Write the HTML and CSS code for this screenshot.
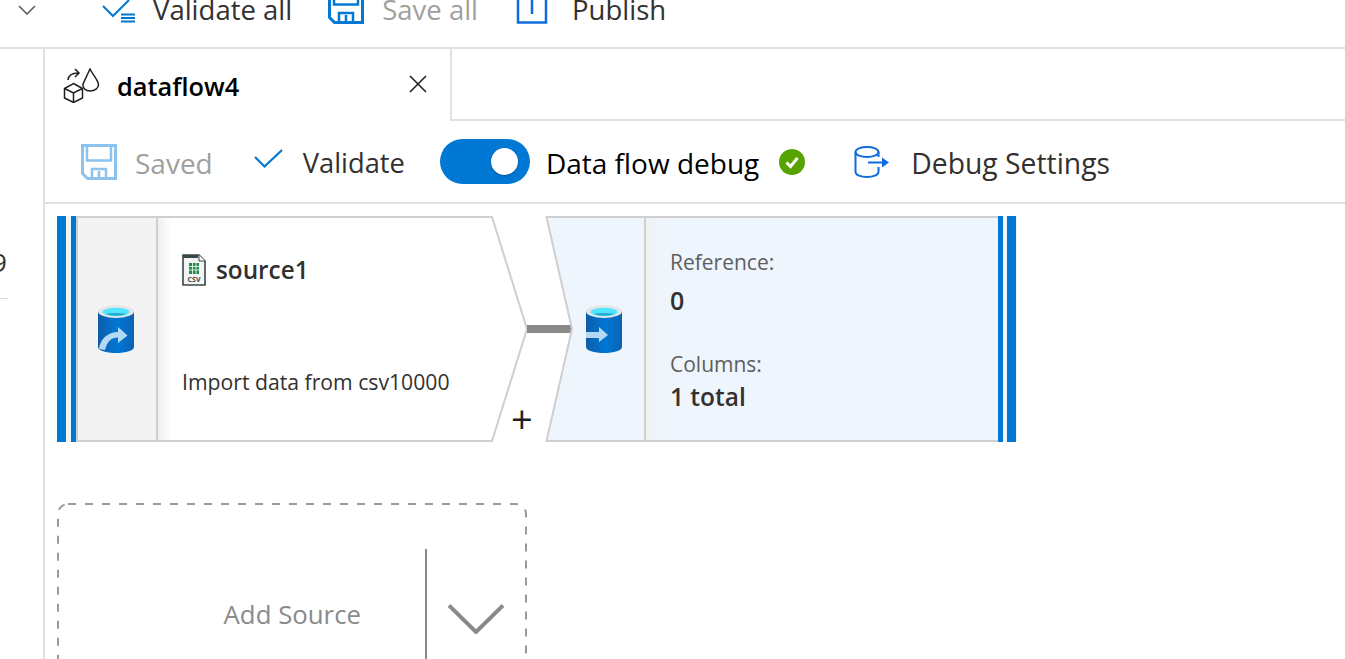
FILE: index.html
```html
<!DOCTYPE html>
<html lang="en">
<head>
<meta charset="utf-8">
<title>dataflow4</title>
<link rel="stylesheet" href="styles.css">
</head>
<body>
<svg class="defs" width="0" height="0" aria-hidden="true">
  <defs>
    <symbol id="save" viewBox="0 0 36 36">
      <path d="M1.5 1.5H34.5V34.5H6.5L1.5 29.5Z" fill="none" stroke="currentColor" stroke-width="3"/>
      <path d="M6 2V16.5H30V2" fill="none" stroke="currentColor" stroke-width="2.5"/>
      <path d="M11 34V25H25V34M18 27V34" fill="none" stroke="currentColor" stroke-width="2.5"/>
    </symbol>
    <linearGradient id="db" x1="0" x2="1" y1="0" y2="0">
      <stop offset="0" stop-color="#0f5ca8"/>
      <stop offset=".55" stop-color="#0078d4"/>
      <stop offset="1" stop-color="#0a62b4"/>
    </linearGradient>
    <linearGradient id="fade" gradientUnits="userSpaceOnUse" x1="0" x2="14" y1="0" y2="0">
      <stop offset="0" stop-color="#efefef"/>
      <stop offset="1" stop-color="#fff"/>
    </linearGradient>
    <symbol id="cyl" viewBox="0 0 36 48">
      <path d="M0 6.500V42C0 45.500 8 48 18 48S36 45.500 36 42V6.500Z" fill="url(#db)"/>
      <ellipse cx="18" cy="6.500" rx="18" ry="6.500" fill="#e4e6e8"/>
      <ellipse cx="18" cy="7" rx="13.500" ry="4.200" fill="#50e6ff"/>
      <path d="M8 9C12 7.800 24 7.800 28 9C24 11.200 12 11.200 8 9Z" fill="#2aa9cf"/>
    </symbol>
  </defs>
</svg>

<header class="topbar">
  <svg class="ic-chev" viewBox="0 0 18 10"><path d="M1 1L9 9L17 1" fill="none" stroke="#605e5c" stroke-width="1.6"/></svg>
  <button class="cmd cmd-validate">
    <svg class="ic-checklist" viewBox="0 0 33 24"><path d="M1 7L11 17L27 1" fill="none" stroke="#0078d4" stroke-width="2"/><path d="M19 15.500H33M19 19H33M19 22.500H33" stroke="#0078d4" stroke-width="2"/></svg>
    <span>Validate all</span>
  </button>
  <button class="cmd cmd-save">
    <svg class="ic-save"><use href="#save"/></svg>
    <span class="muted">Save all</span>
  </button>
  <button class="cmd cmd-publish">
    <svg class="ic-publish" viewBox="0 0 32 36"><path d="M2 0V34.500H30V0M16 0V26" fill="none" stroke="#0f6cdc" stroke-width="2.500"/></svg>
    <span>Publish</span>
  </button>
</header>

<div class="workspace">
  <aside class="rail">
    <div class="rail-item">9</div>
  </aside>

  <main class="main">
    <div class="tabs">
      <div class="tab">
        <svg class="ic-flow" viewBox="0 0 37 35">
          <g fill="none" stroke="#201f1e" stroke-width="1.500">
            <path d="M10.500 15.500L19.500 20.500V30L10.500 34.500L1.500 30V20.500Z"/>
            <path d="M1.500 20.500L10.500 25L19.500 20.500M10.500 25V34.500"/>
            <path d="M5 12C5.500 8 9 5 15 5M12 1L16 5L12 9"/>
            <path d="M27 1L20 16C19.500 20 22.500 23 27 23C32 23 35.500 20 35.500 16.500C35.500 13 30 7 27 1Z"/>
          </g>
        </svg>
        <span class="tab-title">dataflow4</span>
        <svg class="ic-close" viewBox="0 0 18 18"><path d="M1 1L17 17M17 1L1 17" stroke="#201f1e" stroke-width="1.600"/></svg>
      </div>
      <div class="tab-rest"></div>
    </div>

    <div class="toolbar">
      <button class="cmd cmd-saved">
        <svg class="ic-saved"><use href="#save"/></svg>
        <span class="muted bar-text">Saved</span>
      </button>
      <button class="cmd cmd-check">
        <svg class="ic-check" viewBox="0 0 29 19"><path d="M1 8L10.500 17.500L28 1" fill="none" stroke="#0078d4" stroke-width="2.200"/></svg>
        <span class="bar-text">Validate</span>
      </button>
      <div class="toggle"><span class="knob"></span></div>
      <span class="debug-label bar-text">Data flow debug</span>
      <svg class="ic-ok" viewBox="0 0 26 26"><circle cx="13" cy="13" r="13" fill="#57a300"/><path d="M7.500 13.500L11.500 17.500L18.500 9" fill="none" stroke="#fff" stroke-width="3"/></svg>
      <button class="cmd cmd-debug">
        <svg class="ic-debug" viewBox="0 0 35 32">
          <path d="M24.500 11V6C24.500 3 19 1 13 1S1.500 3 1.500 6V26C1.500 29 7 31 13 31S24.500 29 24.500 26V21" fill="none" stroke="#0f6cdc" stroke-width="2"/>
          <path d="M1.500 6C1.500 9 7 11 13 11S24.500 9 24.500 6" fill="none" stroke="#0f6cdc" stroke-width="2"/>
          <path d="M14 16.500H29" stroke="#0f6cdc" stroke-width="2"/>
          <path d="M28 11.500L35 16.500L28 21.500Z" fill="#0f6cdc"/>
        </svg>
        <span class="bar-text">Debug Settings</span>
      </button>
    </div>

    <section class="canvas">
      <div class="flow">
        <article class="source">
          <div class="bars"><i class="bar bar-wide"></i><i class="bar bar-thin"></i></div>
          <div class="icon-cell">
            <svg class="ic-db" viewBox="0 0 36 48">
              <use href="#cyl"/>
              <path d="M1 44C2 34 10 27 20 27V22L29.500 30.500L20 38V32.500C13 32.500 9 37 7 45Z" fill="#b3d9f5"/>
            </svg>
          </div>
          <div class="source-body">
            <svg class="shape" viewBox="0 0 369 226" preserveAspectRatio="none"><path d="M0 1H334L369 113L334 225H0" fill="url(#fade)" stroke="#cfcfcf" stroke-width="2"/></svg>
            <div class="source-title">
              <svg class="ic-csv" viewBox="0 0 24 32">
                <path d="M1 1H17L23 7V31H1Z" fill="#f4f4f4" stroke="#38474a" stroke-width="1.600"/>
                <path d="M1 1H16V4H1Z" fill="#38474a"/>
                <path d="M17 1V7H23" fill="#fff" stroke="#38474a" stroke-width="1"/>
                <path d="M7 9H17V20H7Z" fill="#1f8a4c"/>
                <path d="M7 12.500H17M7 16H17M10.500 9V20M14 9V20" stroke="#fff" stroke-width=".8"/>
                <text x="12" y="28" class="csv-text">CSV</text>
              </svg>
              <span class="source-name">source1</span>
            </div>
            <p class="source-desc">Import data from csv10000</p>
          </div>
        </article>

        <i class="link"></i>
        <span class="plus">+</span>

        <article class="sink">
          <div class="sink-icon">
            <svg class="shape" viewBox="0 0 100 226" preserveAspectRatio="none"><path d="M.5 1H99V225H.5L26 113Z" fill="#eef5fc" stroke="#cfcfcf" stroke-width="2"/></svg>
            <svg class="ic-db ic-db-sink" viewBox="0 0 36 48">
              <use href="#cyl"/>
              <path d="M0 27H13V22L22 30L13 37V33H0Z" fill="#b3d9f5"/>
            </svg>
          </div>
          <div class="sink-body">
            <div class="meta-label">Reference:</div>
            <div class="meta-value">0</div>
            <div class="meta-label meta-gap">Columns:</div>
            <div class="meta-total">1 total</div>
          </div>
          <div class="bars bars-right"><i class="bar bar-thin"></i><i class="bar bar-wide"></i></div>
        </article>
      </div>

      <div class="add-source">
        <svg class="dash" width="470" height="220"><rect x="1" y="1" width="468" height="218" rx="10" fill="none" stroke="#9a9a9a" stroke-width="2" stroke-dasharray="8 9"/></svg>
        <span class="add-label">Add Source</span>
        <i class="add-divider"></i>
        <svg class="ic-add" viewBox="0 0 56 30"><path d="M1 1.500L28 28L55 1.500" fill="none" stroke="#8a8a8a" stroke-width="4"/></svg>
      </div>
    </section>
  </main>
</div>
</body>
</html>
```

FILE: styles.css
```css
* { box-sizing: border-box; }

html, body {
  margin: 0;
  height: 659px;
  overflow: hidden;
  background: #fff;
}

body {
  width: 1345px;
  font-family: "Open Sans", "Noto Sans", "Liberation Sans", sans-serif;
  font-size: 28px;
  color: #323130;
}

.defs { display: block; height: 0; }

button {
  font: inherit;
  color: inherit;
  background: none;
  border: 0;
  padding: 0;
}

.cmd {
  display: flex;
  align-items: center;
  white-space: nowrap;
}

.muted { color: #a19f9d; }

/* top command bar */
.topbar {
  height: 47px;
  display: flex;
  align-items: flex-start;
  overflow: hidden;
  padding-left: 18px;
  font-size: 27.5px;
}

.ic-chev { width: 18px; height: 10px; margin-top: 5px; }

.topbar .cmd { margin-top: -11px; height: 40px; }

.cmd-validate { margin-left: 66px; }
.ic-checklist { width: 33px; height: 24px; margin-right: 18px; margin-top: 4px; }

.cmd-save { margin-left: 36px; }
.ic-save { width: 36px; height: 36px; margin-right: 18px; margin-top: -6px; color: #0078d4; }

.cmd-publish { margin-left: 38px; }
.ic-publish { width: 32px; height: 36px; margin-right: 24px; margin-top: -6px; }

/* workspace */
.workspace {
  display: flex;
  height: 612px;
  border-top: 2px solid #e1e1e1;
}

.rail {
  flex: 0 0 45px;
  border-right: 2px solid #e1e1e1;
  padding-top: 196px;
  overflow: hidden;
}

.rail-item {
  width: 8px;
  height: 54px;
  border-bottom: 1px solid #d8d8d8;
  line-height: 34px;
  text-indent: -8px;
  color: #323130;
  font-size: 26px;
}

.main { flex: 1; min-width: 0; display: flex; flex-direction: column; }

/* tabs */
.tabs { display: flex; height: 72px; }

.tab {
  flex: 0 0 407px;
  display: flex;
  align-items: center;
  border-right: 2px solid #e1e1e1;
  padding: 2px 23px 0 18px;
}

.ic-flow { width: 37px; height: 35px; margin-top: -2px; }

.tab-title {
  flex: 1;
  margin-left: 17px;
  font-size: 25.4px;
  font-weight: 600;
  color: #000;
}

.ic-close { width: 18px; height: 18px; margin-top: -4px; }

.tab-rest { flex: 1; border-bottom: 2px solid #e1e1e1; }

/* toolbar */
.toolbar {
  height: 83px;
  display: flex;
  align-items: center;
  border-bottom: 2px solid #e1e1e1;
  padding-left: 36px;
}

.bar-text { margin-top: 2px; }

.ic-saved { width: 36px; height: 36px; margin-right: 18px; color: #8cc2ec; }

.cmd-check { margin-left: 41px; font-size: 27.3px; }
.ic-check { width: 29px; height: 19px; margin-right: 20px; margin-top: -6px; }

.toggle {
  width: 90px;
  height: 45px;
  margin-left: 35px;
  border-radius: 23px;
  background: #0078d4;
  display: flex;
  align-items: center;
  justify-content: flex-end;
  padding-right: 12px;
}

.knob {
  width: 27px;
  height: 27px;
  border-radius: 50%;
  background: #fff;
  box-shadow: 0 1px 2px rgba(0, 0, 0, .3);
}

.debug-label { margin-left: 16px; color: #000; white-space: nowrap; }

.ic-ok { width: 26px; height: 26px; margin-left: 20px; }

.cmd-debug { margin-left: 49px; font-size: 28.3px; }
.ic-debug { width: 35px; height: 32px; margin-right: 22px; }

/* canvas */
.canvas { flex: 1; padding: 12px 0 0 12px; overflow: hidden; }

.flow {
  position: relative;
  display: flex;
  height: 226px;
}

.source { display: flex; flex: 0 0 470px; }
.sink { display: flex; flex: 0 0 471px; margin-left: 19px; }

.bars { display: flex; flex: 0 0 19px; background: #f3f3f3; }
.bars-right { background: #eef5fc; }

.bar { display: block; flex: none; background: #0078d4; }
.bar-wide { width: 9px; }
.bar-thin { width: 5px; margin-left: 5px; }
.bars-right .bar-thin { margin: 0 4px 0 0; }

.icon-cell {
  flex: 0 0 82px;
  display: flex;
  align-items: center;
  justify-content: center;
  background: #f3f3f3;
  border: 2px solid #cfcfcf;
}

.ic-db { width: 36px; height: 48px; margin-left: -2px; }

.source-body { position: relative; flex: 1; padding: 38px 0 0 24px; }

.shape { position: absolute; inset: 0; width: 100%; height: 100%; overflow: visible; }

.source-title {
  position: relative;
  display: flex;
  align-items: center;
  height: 32px;
  font-size: 24.3px;
  font-weight: 600;
}

.source-name { line-height: 32px; }

.ic-csv { width: 24px; height: 32px; margin: 0 10px 0 0; }
.csv-text { font-size: 7px; font-weight: 700; text-anchor: middle; fill: #38474a; }

.source-desc {
  position: relative;
  margin: 81px 0 0;
  font-size: 21.2px;
  line-height: 30px;
}

.link {
  position: absolute;
  left: 470px;
  top: 109px;
  width: 45px;
  height: 8px;
  background: #8a8a8a;
}

.plus {
  position: absolute;
  left: 454px;
  top: 182px;
  font-size: 38px;
  line-height: 40px;
  color: #201f1e;
}

.sink-icon {
  position: relative;
  flex: 0 0 100px;
  display: flex;
  align-items: center;
  padding-left: 40px;
}

.ic-db-sink { position: relative; margin-left: 0; }

.sink-body {
  flex: 1;
  background: linear-gradient(90deg, #f1f1f1, #eef5fc 16px);
  border-top: 2px solid #cfcfcf;
  border-bottom: 2px solid #cfcfcf;
  padding: 29px 0 0 24px;
}

.meta-label { font-size: 21px; line-height: 30px; color: #605e5c; }
.meta-value { font-size: 25px; line-height: 34px; margin-top: 6px; font-weight: 600; }
.meta-gap { margin-top: 32px; }
.meta-total { font-size: 24.5px; line-height: 34px; font-weight: 600; margin-top: 1px; }

/* add source */
.add-source {
  position: relative;
  display: flex;
  align-items: flex-start;
  width: 470px;
  height: 220px;
  margin-top: 61px;
  padding-top: 46px;
}

.dash { position: absolute; inset: 0; }

.add-label {
  flex: 0 0 304px;
  margin-top: 47px;
  text-align: right;
  font-size: 25.8px;
  color: #8a8a8a;
  white-space: nowrap;
}

.add-divider {
  flex: none;
  width: 2px;
  height: 200px;
  margin-left: 64px;
  background: #8a8a8a;
}

.ic-add { flex: none; width: 56px; height: 30px; margin: 55px 0 0 21px; }
```
